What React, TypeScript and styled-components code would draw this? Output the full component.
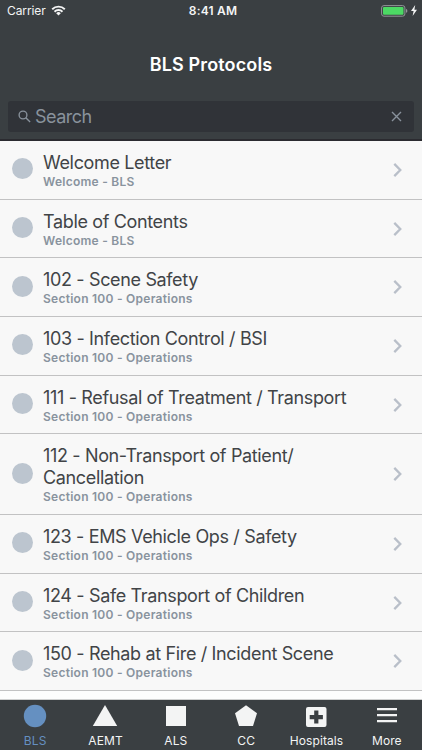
import React from "react";
import styled, { createGlobalStyle } from "styled-components";

const GlobalStyle = createGlobalStyle`
  * { box-sizing: border-box; }
  body { margin: 0; background: #fff; overflow: hidden; }
`;

const Screen = styled.div`
  width: 422px;
  height: 750px;
  display: flex;
  flex-direction: column;
  overflow: hidden;
  background: #fdfdfd;
  font-family: Inter, "Liberation Sans", sans-serif;
`;

const Header = styled.header`
  flex: none;
  height: 141px;
  display: flex;
  flex-direction: column;
  background: #3a3f42;
  border-bottom: 2px solid #2b2b30;
`;

const StatusBar = styled.div`
  height: 22px;
  display: grid;
  grid-template-columns: 1fr auto 1fr;
  align-items: center;
  padding: 0 5px 0 7px;
  color: #f4f5f5;
  font-size: 12px;
`;

const Carrier = styled.div`
  display: flex;
  align-items: center;
  gap: 5px;
  padding-bottom: 1px;
  letter-spacing: -0.1px;
`;

const Clock = styled.div`
  font-weight: 600;
  letter-spacing: 0.2px;
  padding: 0 0 1px 2px;
`;

const Power = styled.div`
  display: flex;
  justify-content: flex-end;
  align-items: center;
  gap: 3px;
  padding-bottom: 1px;
`;

const Title = styled.h1`
  margin: 0;
  height: 79px;
  padding-top: 5px;
  display: flex;
  align-items: center;
  justify-content: center;
  color: #fff;
  font-size: 18px;
  font-weight: 600;
  letter-spacing: 0.14px;
`;

const SearchField = styled.div`
  height: 31px;
  margin: 0 8px;
  padding: 0 12px 0 10px;
  display: flex;
  align-items: center;
  border-radius: 3px;
  background: #303338;
  color: #89929c;
`;

const SearchText = styled.span`
  flex: 1;
  margin-left: 4px;
  font-size: 18px;
  letter-spacing: -0.5px;
`;

const List = styled.main`
  flex: 1;
  min-height: 0;
  overflow: hidden;
`;

const Row = styled.div<{ $tall?: boolean }>`
  height: ${(p) => (p.$tall ? 80.6 : 58.7)}px;
  display: flex;
  align-items: center;
  padding: 0 20px 2px 12px;
  background: #f8f8f8;
  border-bottom: 1px solid #c2c2c3;
`;

const Dot = styled.span`
  flex: none;
  width: 21px;
  height: 21px;
  border-radius: 50%;
  background: #bcc5cf;
`;

const RowText = styled.div`
  flex: 1;
  padding-left: 10px;
  padding-top: 4px;
`;

const RowTitle = styled.div`
  color: #414447;
  font-size: 18px;
  line-height: 22px;
  letter-spacing: -0.35px;
  white-space: pre-line;
`;

const RowSubtitle = styled.div`
  color: #89939e;
  font-size: 12px;
  font-weight: 600;
  line-height: 16px;
  letter-spacing: 0.26px;
`;

const Chevron = styled.svg`
  flex: none;
  margin-top: 2px;
`;

const TabBar = styled.nav`
  flex: none;
  height: 51px;
  display: grid;
  grid-template-columns: repeat(6, 1fr);
  background: #3a3f42;
  border-top: 1px solid #cfd0d0;
`;

const Tab = styled.div<{ $active?: boolean }>`
  display: flex;
  flex-direction: column;
  align-items: center;
  padding-top: 4px;
  color: ${(p) => (p.$active ? "#6590c1" : "#f3f4f4")};
`;

const TabLabel = styled.span`
  margin-top: 5px;
  font-size: 12px;
  line-height: 16px;
  letter-spacing: 0.1px;
`;

const rows = [
  ["Welcome Letter", "Welcome - BLS"],
  ["Table of Contents", "Welcome - BLS"],
  ["102 - Scene Safety", "Section 100 - Operations"],
  ["103 - Infection Control / BSI", "Section 100 - Operations"],
  ["111 - Refusal of Treatment / Transport", "Section 100 - Operations"],
  ["112 - Non-Transport of Patient/\nCancellation", "Section 100 - Operations"],
  ["123 - EMS Vehicle Ops / Safety", "Section 100 - Operations"],
  ["124 - Safe Transport of Children", "Section 100 - Operations"],
  ["150 - Rehab at Fire / Incident Scene", "Section 100 - Operations"],
];

const tabs = [
  { label: "BLS", icon: <circle cx="12" cy="12" r="11.2" /> },
  { label: "AEMT", icon: <path d="M12 1.1 24.2 22H-.2Z" /> },
  { label: "ALS", icon: <path d="M2 2h20v20H2z" /> },
  { label: "CC", icon: <path d="M12 1.2 23 9.3 19 22H5L1 9.3Z" /> },
  {
    label: "Hospitals",
    icon: (
      <path
        fillRule="evenodd"
        d="M4 3h16.500a2 2 0 0 1 2 2v16a2 2 0 0 1-2 2H4a2 2 0 0 1-2-2V5a2 2 0 0 1 2-2Zm6.200 3.500v4.400H5.700v4.300h4.500v4.400h4.200v-4.400h4.500v-4.300h-4.500V6.500Z"
      />
    ),
  },
  { label: "More", icon: <path d="M2 4h20v2.200H2zM2 10h20v2.200H2zM2 16h20v2.200H2z" /> },
];

export default function App() {
  return (
    <Screen>
      <GlobalStyle />
      <Header>
        <StatusBar>
          <Carrier>
            Carrier
            <svg width="15" height="11" viewBox="0 0 14 11" fill="none" stroke="currentColor" strokeWidth="1.9">
              <path d="M.7 4.200a9 9 0 0 1 12.600 0M3 6.700a5.700 5.700 0 0 1 8 0" />
              <path d="M7 10.500 4.700 8.200a3.300 3.300 0 0 1 4.600 0Z" fill="currentColor" stroke="none" />
            </svg>
          </Carrier>
          <Clock>8:41 AM</Clock>
          <Power>
            <svg width="27" height="12" viewBox="0 0 27 12">
              <rect x=".6" y=".6" width="23.3" height="10.6" rx="2.3" fill="none" stroke="#929698" />
              <rect x="2" y="2" width="20.5" height="7.8" rx="1" fill="#4cd964" />
              <path d="M25 4q1.400.3 1.400 1.900T25 7.800Z" fill="#929698" />
            </svg>
            <svg width="6" height="11" viewBox="0 0 6 11" fill="currentColor">
              <path d="M4.200 0 0 6h2.600L1.600 11 6 4.700H3.400Z" />
            </svg>
          </Power>
        </StatusBar>
        <Title>BLS Protocols</Title>
        <SearchField>
          <svg width="13" height="13" viewBox="0 0 13 13" fill="none" stroke="currentColor" strokeWidth="1.35">
            <circle cx="5" cy="5" r="3.9" />
            <path d="m7.800 7.800 4.300 4.300" />
          </svg>
          <SearchText>Search</SearchText>
          <svg width="11" height="11" viewBox="0 0 11 11" fill="none" stroke="currentColor" strokeWidth="1.4">
            <path d="m1 1 9 9M10 1 1 10" />
          </svg>
        </SearchField>
      </Header>
      <List>
        {rows.map(([title, subtitle]) => (
          <Row key={title} $tall={title.includes("\n")}>
            <Dot />
            <RowText>
              <RowTitle>{title}</RowTitle>
              <RowSubtitle>{subtitle}</RowSubtitle>
            </RowText>
            <Chevron width="9" height="14" viewBox="0 0 9 14" fill="none" stroke="#b9bfc9" strokeWidth="2.3">
              <path d="m1.300 .9 6 6.100-6 6.100" />
            </Chevron>
          </Row>
        ))}
      </List>
      <TabBar>
        {tabs.map(({ label, icon }, i) => (
          <Tab key={label} $active={i === 0}>
            <svg width="24" height="24" viewBox="0 0 24 24" fill="currentColor" overflow="visible">
              {icon}
            </svg>
            <TabLabel>{label}</TabLabel>
          </Tab>
        ))}
      </TabBar>
    </Screen>
  );
}
